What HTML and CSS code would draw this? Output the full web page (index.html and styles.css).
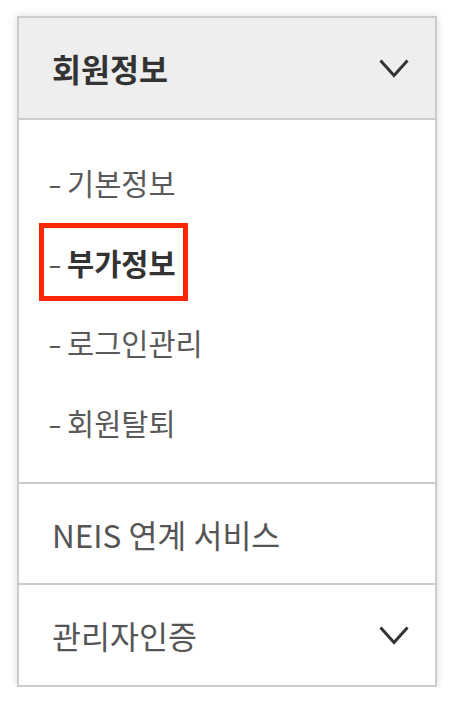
FILE: index.html
```html
<!DOCTYPE html>
<html>
	<head>
		<meta charset="UTF-8">
		<title>회원정보</title>
		<link rel="stylesheet" href="styles.css">
	</head>
	<body>
		<div id="lnb">
			<div class="sec head">
				<span class="tit">회원정보</span>
				<svg class="arrow" width="30" height="19" viewBox="0 0 30 19"><polyline points="1.5,1.5 15,16.5 28.5,1.5" fill="none" stroke="#333" stroke-width="3"/></svg>
			</div>
			<ul class="sub">
				<li><a href="javascript:;"><span class="dash">-</span>기본정보</a></li>
				<li><a href="javascript:;" class="on"><span class="dash">-</span>부가정보</a></li>
				<li><a href="javascript:;"><span class="dash">-</span>로그인관리</a></li>
				<li><a href="javascript:;"><span class="dash">-</span>회원탈퇴</a></li>
			</ul>
			<div class="sec neis">
				<span class="tit">NEIS 연계 서비스</span>
			</div>
			<div class="sec admin">
				<span class="tit">관리자인증</span>
				<svg class="arrow" width="30" height="19" viewBox="0 0 30 19"><polyline points="1.5,1.5 15,16.5 28.5,1.5" fill="none" stroke="#333" stroke-width="3"/></svg>
			</div>
		</div>
	</body>
</html>
```

FILE: styles.css
```css
*{
	padding: 0px;margin: 0px;
}
body{
	background: #fff;
	font-family: "Noto Sans CJK KR", "Noto Sans", sans-serif;
}
ul{
	list-style: none;
}
a{
	text-decoration: none;
}
#lnb{
	width: 420px;
	margin: 16px 0 0 17px;
	border: 2px solid #ccc;
	box-sizing: border-box;
	background: #fff;
	box-shadow: 0 0 8px rgba(0,0,0,0.15);
}
.sec{
	display: flex;
	align-items: center;
	justify-content: space-between;
	padding: 0 26px 0 33px;
	height: 100px;
}
.sec .tit{
	font-size: 31.5px;
	color: #555;
}
.head{
	background: #eee;
}
.head .tit{
	font-weight: bold;
	color: #333;
}
.sub{
	border-top: 2px solid #ccc;
	padding: 22px 0 20px;
}
.sub li{
	height: 80px;
	display: flex;
	align-items: center;
	padding-left: 20px;
}
.sub a{
	display: inline-flex;
	align-items: center;
	height: 78px;
	box-sizing: border-box;
	padding: 0 7px 0 4px;
	border: 5px solid transparent;
	font-size: 29.5px;
	color: #5a5a5a;
}
.sub a .dash{
	display: inline-block;
	width: 19px;
	font-weight: normal;
	color: #5a5a5a;
	transform: scaleX(1.35);
	transform-origin: left center;
}
.sub a.on{
	border-color: #fa2800;
	font-weight: bold;
	color: #333;
}
.neis{
	border-top: 2px solid #ccc;
	height: 99px;
}
.admin{
	border-top: 2px solid #ccc;
}
```
